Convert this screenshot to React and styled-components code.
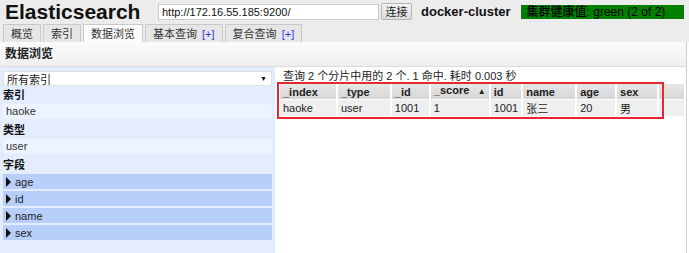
import styled, { createGlobalStyle } from "styled-components";

const GlobalStyle = createGlobalStyle`
    html, body {
        margin: 0;
        padding: 0;
        background: #ffffff;
    }
    body {
        font-family: "Liberation Sans", "Noto Sans CJK SC", sans-serif;
        font-size: 11px;
        color: #222;
    }
`;

const columns = [
    { key: "_index", width: 56 },
    { key: "_type", width: 52 },
    { key: "_id", width: 37 },
    { key: "_score", width: 58, sorted: true },
    { key: "id", width: 29 },
    { key: "name", width: 52 },
    { key: "age", width: 38 },
    { key: "sex", width: 40 },
    { key: "", width: 25 },
];

const row = ["haoke", "user", "1001", "1", "1001", "张三", "20", "男", ""];

const fields = ["age", "id", "name", "sex"];

const App = () => {
    return (
        <Page>
            <GlobalStyle />
            <Header>
                <TopBar>
                    <Logo>Elasticsearch</Logo>
                    <UrlInput defaultValue="http://172.16.55.185:9200/" />
                    <ConnectButton>连接</ConnectButton>
                    <ClusterName>docker-cluster</ClusterName>
                    <Health>集群健康值: green (2 of 2)</Health>
                </TopBar>
                <Tabs>
                    <Tab>概览</Tab>
                    <Tab>索引</Tab>
                    <Tab $active>数据浏览</Tab>
                    <Tab>基本查询 <Plus>[+]</Plus></Tab>
                    <Tab>复合查询 <Plus>[+]</Plus></Tab>
                </Tabs>
            </Header>

            <Panel>
                <PanelTitle>数据浏览</PanelTitle>
                <Main>
                    <Sidebar>
                        <Select>
                            <span>所有索引</span>
                            <Arrow>▼</Arrow>
                        </Select>
                        <SectionTitle>索引</SectionTitle>
                        <Item>haoke</Item>
                        <SectionTitle>类型</SectionTitle>
                        <Item>user</Item>
                        <SectionTitle>字段</SectionTitle>
                        <FieldList>
                            {fields.map(f => (
                                <Field key={f}>
                                    <Triangle />
                                    {f}
                                </Field>
                            ))}
                        </FieldList>
                    </Sidebar>

                    <Results>
                        <Summary>查询 2 个分片中用的 2 个. 1 命中. 耗时 0.003 秒</Summary>
                        <Table>
                            <thead>
                                <tr>
                                    {columns.map((c, i) => (
                                        <Th key={i} style={{ width: c.width }}>
                                            {c.key}
                                            {c.sorted && <SortMark>▲</SortMark>}
                                        </Th>
                                    ))}
                                </tr>
                            </thead>
                            <tbody>
                                <tr>
                                    {row.map((v, i) => (
                                        <Td key={i}>{v}</Td>
                                    ))}
                                </tr>
                            </tbody>
                        </Table>
                        <Highlight />
                    </Results>
                </Main>
            </Panel>
        </Page>
    );
};

export default App;

const Page = styled.div`
    width: 689px;
    height: 253px;
    overflow: hidden;
`;

const Header = styled.div`
    background: #ececec;
    padding-top: 2px;
`;

const TopBar = styled.div`
    display: flex;
    align-items: center;
    height: 19px;
    padding-left: 5px;
`;

const Logo = styled.h1`
    margin: 0;
    font-size: 21px;
    font-weight: 700;
    color: #111;
    line-height: 19px;
    width: 153px;
`;

const UrlInput = styled.input`
    box-sizing: border-box;
    width: 221px;
    height: 16px;
    border: 1px solid #c8c8c8;
    background: #fff;
    font-family: "Liberation Sans", sans-serif;
    font-size: 11px;
    padding: 0 3px;
    color: #111;
    outline: none;
`;

const ConnectButton = styled.button`
    box-sizing: border-box;
    margin-left: 2px;
    width: 31px;
    height: 17px;
    padding: 0;
    border: 1px solid #b4b4b4;
    border-radius: 2px;
    background: linear-gradient(#f4f4f4, #dcdcdc);
    font-family: "Noto Sans CJK SC", sans-serif;
    font-size: 11px;
    color: #222;
    line-height: 15px;
`;

const ClusterName = styled.span`
    margin-left: 9px;
    font-size: 13px;
    font-weight: 700;
    color: #111;
`;

const Health = styled.span`
    margin-left: 10px;
    width: 163px;
    height: 14px;
    box-sizing: border-box;
    padding-left: 6px;
    background: #008000;
    color: #000;
    font-size: 12px;
    font-weight: 500;
    line-height: 14px;
    white-space: nowrap;
    overflow: hidden;
`;

const Tabs = styled.div`
    display: flex;
    gap: 2px;
    padding: 3px 0 0 3px;
    height: 18px;
    align-items: flex-end;
`;

const Tab = styled.div`
    box-sizing: border-box;
    height: 18px;
    padding: 0 7px;
    border: 1px solid #c9c9c9;
    border-bottom: none;
    background: ${p => (p.$active ? "#fbfbfb" : "#e6e6e6")};
    color: #333;
    font-size: 11px;
    line-height: 18px;
    white-space: nowrap;
`;

const Plus = styled.span`
    color: #3333ee;
    margin-left: 2px;
`;

const Panel = styled.div`
    width: 687px;
    height: 213px;
    box-sizing: border-box;
    border-right: 1px solid #cfcfcf;
    border-bottom: 1px solid #cfcfcf;
    display: flex;
    flex-direction: column;
`;

const PanelTitle = styled.div`
    height: 24px;
    flex-shrink: 0;
    border-bottom: 1px solid #dcdcdc;
    background: linear-gradient(#fbfbfb, #eeeeee);
    padding-left: 5px;
    font-size: 12px;
    font-weight: 700;
    line-height: 24px;
    color: #222;
`;

const Main = styled.div`
    flex: 1;
    display: grid;
    grid-template-columns: 275px 1fr;
    min-height: 0;
`;

const Sidebar = styled.div`
    background: #e3edfe;
    padding: 4px 3px 0 3px;
    display: flex;
    flex-direction: column;
`;

const Select = styled.div`
    box-sizing: border-box;
    height: 15px;
    background: #fff;
    border: 1px solid #e0e0e0;
    display: flex;
    align-items: center;
    justify-content: space-between;
    padding: 0 4px 0 3px;
    font-size: 11px;
    color: #222;
`;

const Arrow = styled.span`
    font-size: 7px;
    color: #111;
`;

const SectionTitle = styled.div`
    height: 17px;
    line-height: 19px;
    font-weight: 700;
    font-size: 11px;
    color: #111;
`;

const Item = styled.div`
    height: 15px;
    margin-top: 1px;
    margin-bottom: 2px;
    padding-left: 3px;
    background: #edf3ff;
    line-height: 15px;
    color: #333;
`;

const FieldList = styled.div`
    display: flex;
    flex-direction: column;
    gap: 2px;
    margin-top: 1px;
`;

const Field = styled.div`
    display: flex;
    align-items: center;
    height: 15px;
    padding-left: 3px;
    background: #b8cffc;
    color: #222;
    font-size: 11px;
`;

const Triangle = styled.span`
    width: 0;
    height: 0;
    margin-right: 4px;
    border-top: 5px solid transparent;
    border-bottom: 5px solid transparent;
    border-left: 5px solid #111;
`;

const Results = styled.div`
    position: relative;
    padding: 3px 0 0 5px;
`;

const Summary = styled.div`
    padding-left: 3px;
    height: 13px;
    line-height: 13px;
    font-size: 11px;
    color: #222;
    white-space: nowrap;
`;

const Table = styled.table`
    border-collapse: separate;
    border-spacing: 2px 1px;
    margin-left: -2px;
    font-size: 11px;
`;

const Th = styled.th`
    box-sizing: border-box;
    height: 15px;
    padding: 0 3px;
    text-align: left;
    background: linear-gradient(#e6e6e6, #d6d6d6);
    font-weight: 700;
    color: #222;
    white-space: nowrap;
`;

const SortMark = styled.span`
    float: right;
    font-size: 8px;
    line-height: 15px;
`;

const Td = styled.td`
    height: 15px;
    padding: 0 3px;
    background: #efefef;
    color: #222;
    white-space: nowrap;
`;

const Highlight = styled.div`
    position: absolute;
    left: 2px;
    top: 15px;
    width: 387px;
    height: 37px;
    box-sizing: border-box;
    border: 2px solid #e62833;
    pointer-events: none;
`;
